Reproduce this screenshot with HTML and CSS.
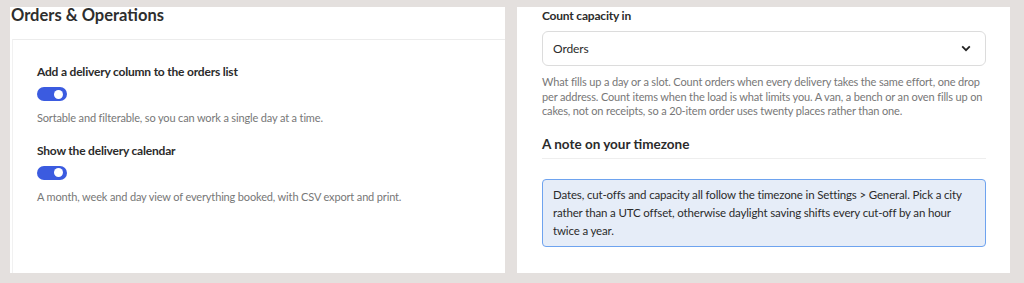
FILE: index.html
```html
<!DOCTYPE html>
<html lang="en">
<head>
    <meta charset="UTF-8">
    <meta name="viewport" content="width=device-width, initial-scale=1.0">
    <title>Delivery Settings</title>
    <link rel="stylesheet" href="styles.css">
</head>
<body>
    <div class="page">
        <div class="panel panel-left">
            <h2 class="panel-title">Orders &amp; Operations</h2>
            <div class="card">
                <div class="setting">
                    <div class="setting-label">Add a delivery column to the orders list</div>
                    <span class="toggle on"><span class="knob"></span></span>
                    <p class="help">Sortable and filterable, so you can work a single day at a time.</p>
                </div>
                <div class="setting">
                    <div class="setting-label">Show the delivery calendar</div>
                    <span class="toggle on"><span class="knob"></span></span>
                    <p class="help">A month, week and day view of everything booked, with CSV export and print.</p>
                </div>
            </div>
        </div>

        <div class="panel panel-right">
            <div class="setting-label">Count capacity in</div>
            <div class="select">
                <span>Orders</span>
                <svg width="10" height="7" viewBox="0 0 10 7"><path d="M1.2 1.4 L5 5.2 L8.8 1.4" fill="none" stroke="#222" stroke-width="1.8"/></svg>
            </div>
            <p class="help help-long">What fills up a day or a slot. Count orders when every delivery takes the same effort, one drop per address. Count items when the load is what limits you. A van, a bench or an oven fills up on cakes, not on receipts, so a 20-item order uses twenty places rather than one.</p>

            <h3 class="section-title">A note on your timezone</h3>
            <div class="note">Dates, cut-offs and capacity all follow the timezone in Settings &gt; General. Pick a city rather than a UTC offset, otherwise daylight saving shifts every cut-off by an hour twice a year.</div>
        </div>
    </div>
</body>
</html>
```

FILE: styles.css
```css
/* Page */
body {
    margin: 0;
    background-color: #e4e0de;
    font-family: 'Lato', 'Noto Sans', sans-serif;
    color: #2b2b2b;
}

.page {
    display: flex;
    gap: 12px;
    padding: 7px 14px 10px 10px;
    height: 266px;
}

.panel {
    background-color: #fff;
    box-sizing: border-box;
}

.panel-left {
    width: 495px;
    display: flex;
    flex-direction: column;
}

.panel-right {
    width: 493px;
    padding: 0 24px 0 25px;
}

.panel-title {
    margin: 0;
    height: 32px;
    font-size: 16.5px;
    font-weight: 700;
    line-height: 16px;
    padding-left: 1px;
    color: #2e2e2e;
}

.card {
    flex: 1;
    margin-left: 2px;
    border-top: 1px solid #ececec;
    border-left: 1px solid #f1f1f1;
    padding: 23px 24px 0;
}

.setting {
    margin-bottom: 16px;
}

.setting-label {
    font-size: 12px;
    font-weight: 700;
    letter-spacing: -0.2px;
    line-height: 18px;
    color: #2b2b2b;
}

.toggle {
    display: block;
    width: 30px;
    height: 14px;
    margin-top: 6px;
    border-radius: 7px;
    background-color: #3b5be0;
    position: relative;
}

.knob {
    position: absolute;
    top: 2.5px;
    right: 4px;
    width: 9px;
    height: 9px;
    border-radius: 50%;
    background-color: #fff;
}

.help {
    margin: 10px 0 0;
    font-size: 11px;
    letter-spacing: -0.15px;
    line-height: 14.5px;
    color: #777;
}

.select {
    display: flex;
    align-items: center;
    justify-content: space-between;
    height: 35px;
    margin-top: 6px;
    padding: 0 10px;
    border: 1px solid #dcdcdc;
    border-radius: 6px;
    box-sizing: border-box;
    font-size: 12px;
    letter-spacing: -0.1px;
    color: #2b2b2b;
}

.select svg {
    margin-right: 4px;
}

.help-long {
    margin-top: 9px;
}

.section-title {
    margin: 16px 0 0;
    padding-bottom: 5px;
    border-bottom: 1px solid #eeeeee;
    font-size: 13.5px;
    font-weight: 700;
    line-height: 18px;
}

.note {
    margin-top: 20px;
    padding: 6px 5px 6px 10px;
    border: 1.5px solid #6ea3ef;
    border-radius: 4px;
    background-color: #e6edf8;
    font-size: 11.5px;
    letter-spacing: -0.15px;
    line-height: 18px;
    color: #2b2b2b;
}
```
